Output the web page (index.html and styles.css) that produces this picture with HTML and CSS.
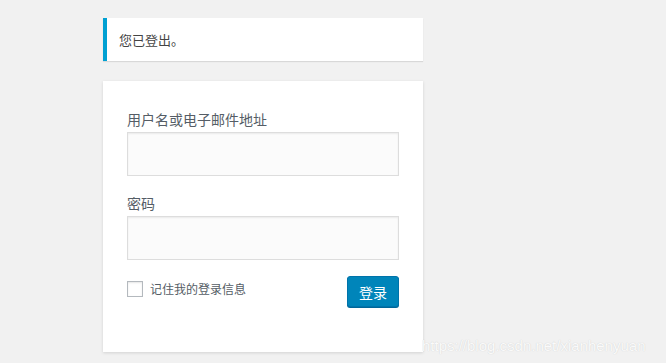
FILE: index.html
```html
<!DOCTYPE html>
<html lang="zh-CN">
<head>
<meta charset="utf-8">
<link rel="stylesheet" href="styles.css">
</head>
<body>
<div class="login">
  <p class="notice">您已登出。</p>
  <form class="loginform">
    <label class="field-label" for="user">用户名或电子邮件地址</label>
    <input class="input" id="user" type="text">
    <label class="field-label" for="pass">密码</label>
    <input class="input" id="pass" type="password">
    <div class="submit-row">
      <label class="remember"><span class="checkbox"></span>记住我的登录信息</label>
      <button class="button" type="button">登录</button>
    </div>
  </form>
</div>
<div class="watermark">https://blog.csdn.net/xianhenyuan</div>
</body>
</html>
```

FILE: styles.css
```css
html, body {
  margin: 0;
  padding: 0;
  background: #f1f1f1;
  height: 100%;
  font-family: "Noto Sans CJK SC", "Noto Sans", sans-serif;
  color: #444;
}
body {
  position: relative;
  overflow: hidden;
}
.login {
  width: 320px;
  padding: 18px 0 0 103px;
}
.notice {
  margin: 0 0 20px;
  height: 43px;
  box-sizing: border-box;
  background: #fff;
  border-left: 4px solid #00a0d2;
  box-shadow: 0 1px 1px rgba(0,0,0,0.1);
  padding: 0 0 0 12px;
  font-size: 13px;
  line-height: 43px;
  color: #444;
}
.loginform {
  background: #fff;
  box-shadow: 0 1px 3px rgba(0,0,0,0.13);
  padding: 27px 24px 45px;
  margin: 0;
}
.field-label {
  display: block;
  font-size: 14px;
  line-height: 22px;
  color: #555d66;
  margin-bottom: 2px;
}
.input {
  display: block;
  box-sizing: border-box;
  width: 100%;
  height: 44px;
  margin: 0 0 16px;
  padding: 3px;
  border: 1px solid #ddd;
  background: #fbfbfb;
  font-size: 24px;
  outline: none;
  box-shadow: inset 0 1px 2px rgba(0,0,0,0.07);
}
.submit-row {
  display: flex;
  justify-content: space-between;
  align-items: flex-start;
}
.remember {
  display: flex;
  align-items: center;
  margin-top: 5px;
  font-size: 12px;
  line-height: 16px;
  color: #555d66;
}
.checkbox {
  width: 16px;
  height: 16px;
  box-sizing: border-box;
  border: 1px solid #b4b9be;
  background: #fff;
  margin-right: 7px;
  box-shadow: inset 0 1px 2px rgba(0,0,0,0.1);
}
.button {
  width: 52px;
  height: 31px;
  padding: 0;
  background: #0085ba;
  border: 1px solid #0073aa;
  border-radius: 3px;
  box-shadow: 0 1px 0 #006799;
  color: #fff;
  font-family: inherit;
  font-size: 14px;
  line-height: 28px;
}
.watermark {
  position: absolute;
  left: 422px;
  top: 337px;
  font-family: "Liberation Sans", Arial, sans-serif;
  font-size: 15px;
  line-height: 18px;
  color: #fafafa;
  text-shadow: 0 0 1px #c8c8c8;
}
```
